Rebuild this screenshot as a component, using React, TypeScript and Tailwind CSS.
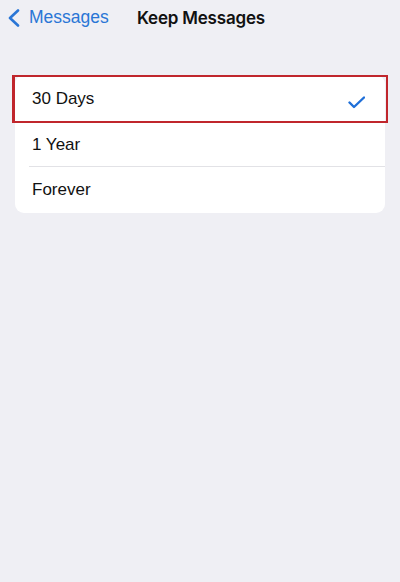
const options = ['30 Days', '1 Year', 'Forever']
const rowHeights = ['h-[48px]', 'h-[43px]', 'h-[46px]']

export default function App() {
    const selected = 0

    return (
        <div className="min-h-[582px] w-full bg-[#efeff4] font-['Liberation_Sans',Arial,sans-serif] antialiased">
            {/* Nav bar */}
            <div className="relative flex h-[36px] items-center">
                <div className="flex items-center pl-[7px] text-[#2a76d6]">
                    <svg width="14" height="18" viewBox="0 0 14 18" fill="none">
                        <path d="M11 1.5L3 9L11 16.5" stroke="currentColor" strokeWidth="2.6" strokeLinecap="round" strokeLinejoin="round" />
                    </svg>
                    <span className="ml-[8px] text-[17.5px] leading-none">Messages</span>
                </div>
                <div className="absolute left-[137px] font-['Inter',sans-serif] text-[17px] font-semibold leading-none tracking-[-0.2px] text-[#111]">
                    Keep Messages
                </div>
            </div>

            {/* Options list */}
            <div className="px-[15px] pt-[39px]">
                <div className="rounded-[9px] bg-white">
                    {options.map((opt, i) => (
                        <div key={opt} className="relative">
                            {i === selected && (
                                <div className="pointer-events-none absolute -left-[3px] -right-[3px] top-0 bottom-0 border-2 border-l-[3px] border-[#c0262c]" />
                            )}
                            <div className={`flex ${rowHeights[i]} items-center pl-[17px] pr-[20px]`}>
                                <span className="flex-1 text-[17px] text-[#111]">{opt}</span>
                                {i === selected && (
                                    <svg width="17" height="13" viewBox="0 0 17 13" fill="none" className="mt-[7px] text-[#1f6fd8]">
                                        <path d="M1.5 6.5L6 11L16 1.5" stroke="currentColor" strokeWidth="2.4" strokeLinecap="round" strokeLinejoin="round" />
                                    </svg>
                                )}
                            </div>
                            {i === 1 && <div className="ml-[14px] h-px bg-[#e2e2e6]" />}
                        </div>
                    ))}
                </div>
            </div>
        </div>
    )
}
